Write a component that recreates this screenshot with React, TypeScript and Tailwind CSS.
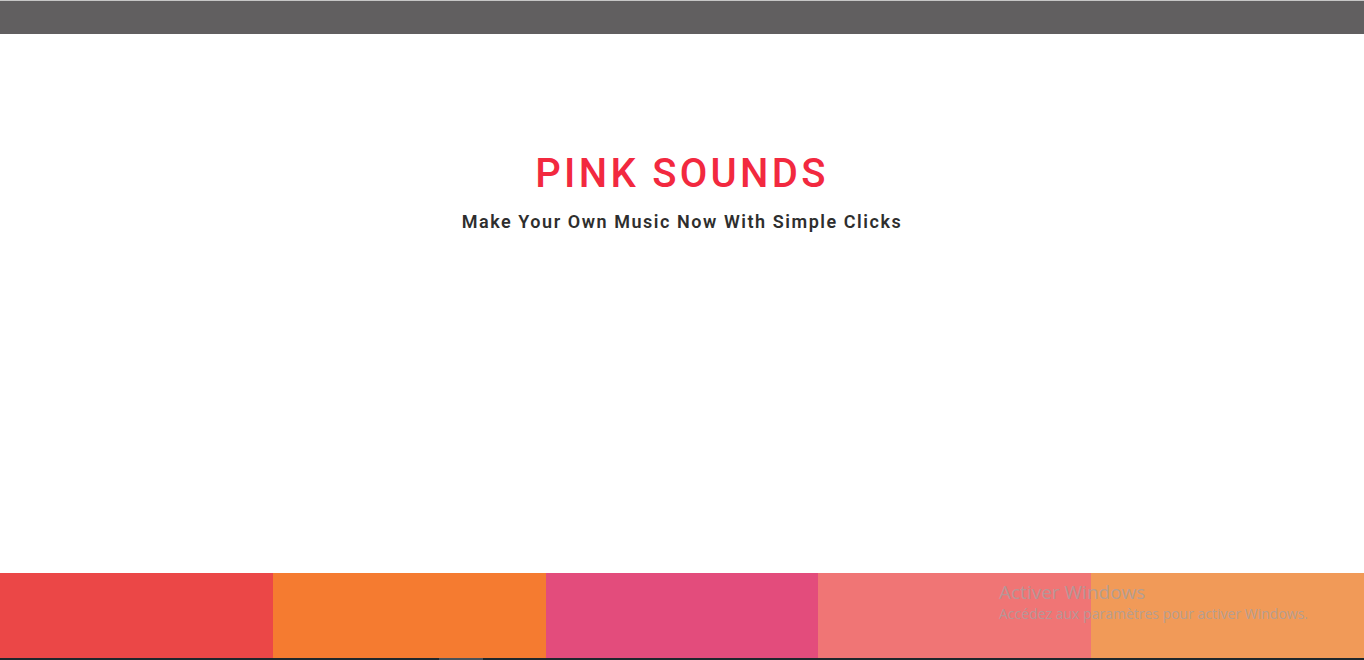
import React from 'react';

const pads = [
  { key: 'a', color: 'bg-[#eb4747]' },
  { key: 'b', color: 'bg-[#f57b30]' },
  { key: 'c', color: 'bg-[#e34c7c]' },
  { key: 'd', color: 'bg-[#f07575]' },
  { key: 'e', color: 'bg-[#f19a58]' },
];

export default function App() {
  return (
    <div className="relative flex h-[660px] w-full flex-col overflow-hidden bg-white font-['Roboto','Liberation_Sans',sans-serif]">
      <div className="h-[34px] border-t border-[#c6c6c6] bg-[#615f60]" />

      <main className="flex flex-1 flex-col items-center pt-[117px]">
        <h1 className="text-[40px] font-medium leading-[46px] tracking-[3.3px] text-[#f2293f]">
          PINK SOUNDS
        </h1>
        <p className="mt-[11px] text-[18px] font-semibold tracking-[1.55px] text-[#2e2e2e]">
          Make Your Own Music Now With Simple Clicks
        </p>
      </main>

      <div className="grid h-[85px] grid-cols-5">
        {pads.map((pad) => (
          <button key={pad.key} className={`h-full w-full ${pad.color}`} />
        ))}
      </div>
      <div className="flex h-[2px] bg-[#1e272c] pl-[439px]">
        <div className="h-full w-[44px] bg-[#4a5258]" />
      </div>

      <div className="pointer-events-none absolute left-[999px] top-[580px] font-['Open_Sans','Liberation_Sans',sans-serif] text-[#a6a0a0]/80">
        <div className="text-[19px] leading-[24px]">Activer Windows</div>
        <div className="text-[14px] leading-[20px]">Accédez aux paramètres pour activer Windows.</div>
      </div>
    </div>
  );
}
